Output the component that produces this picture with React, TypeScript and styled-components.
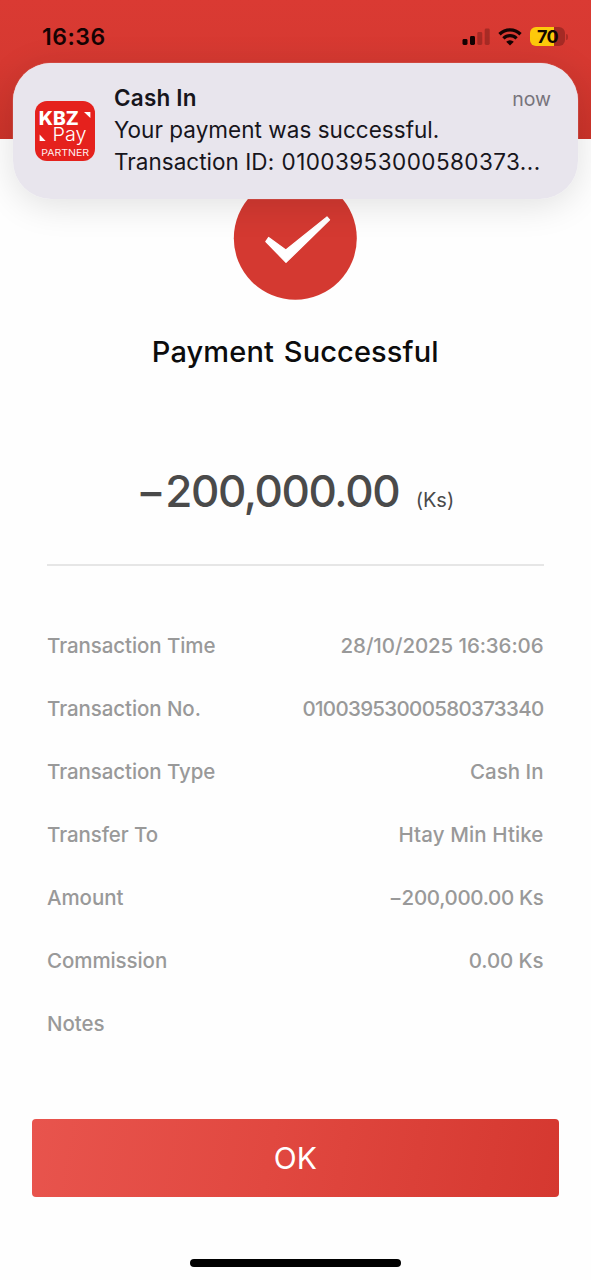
import React from "react";
import styled, { createGlobalStyle } from "styled-components";

const GlobalStyle = createGlobalStyle`
  *, *::before, *::after { box-sizing: border-box; }
  html, body { margin: 0; padding: 0; background: #fefefe; }
  body { font-family: Inter, "Liberation Sans", sans-serif; }
`;

const Screen = styled.div`
  position: relative;
  display: flex;
  flex-direction: column;
  width: 591px;
  height: 1280px;
  overflow: hidden;
  background: #fefefe;
`;

const Header = styled.header`
  flex: none;
  height: 138.5px;
  padding: 20px 23px 0 42px;
  background: linear-gradient(#da3a33 0%, #d63931 45%, #cb332a 100%);
`;

const StatusBar = styled.div`
  display: flex;
  align-items: center;
  justify-content: space-between;
  height: 33px;
`;

const Clock = styled.time`
  font-size: 23px;
  font-weight: 600;
  letter-spacing: 0.5px;
  color: #150303;
`;

const StatusIcons = styled.div`
  display: flex;
  align-items: center;
  gap: 8px;
`;

const Battery = styled.div`
  display: flex;
  align-items: center;
  gap: 1px;
`;

const BatteryBody = styled.div`
  width: 35px;
  height: 19px;
  border-radius: 6px;
  background: linear-gradient(90deg, #fdc90b 0 69%, #a52a24 69%);
  color: #120800;
  font-size: 18px;
  font-weight: 700;
  line-height: 19px;
  letter-spacing: -0.6px;
  text-align: center;
`;

const BatteryTip = styled.div`
  width: 2px;
  height: 6px;
  border-radius: 0 2px 2px 0;
  background: #ad2c26;
`;

const Banner = styled.aside`
  position: absolute;
  z-index: 2;
  top: 63px;
  left: 13px;
  display: flex;
  width: 565px;
  height: 136px;
  padding: 18.5px 27px 0 22px;
  border-radius: 38px;
  background: #e8e5ed;
  box-shadow: 0 0 1px rgba(255, 255, 255, 0.9), 0 6px 36px rgba(0, 0, 0, 0.12);
`;

const AppIcon = styled.svg`
  flex: none;
  width: 60px;
  height: 60px;
  margin: 19.5px 19px 0 0;
`;

const BannerBody = styled.div`
  flex: 1;
  min-width: 0;
  color: #17151c;
  font-size: 22.5px;
  line-height: 32px;
`;

const BannerTop = styled.div`
  display: flex;
  justify-content: space-between;
  height: 32px;
`;

const BannerTitle = styled.strong`
  font-weight: 600;
  letter-spacing: 0.2px;
`;

const BannerTime = styled.span`
  color: #77747c;
  font-size: 19.5px;
  line-height: 34px;
`;

const BannerText = styled.div`
  letter-spacing: 0.03px;
  white-space: nowrap;
`;

const BannerNumber = styled.span`
  margin-left: 1px;
  letter-spacing: 0.42px;
`;

const Main = styled.main`
  display: flex;
  flex: 1;
  flex-direction: column;
  align-items: center;
  padding: 38px 32px 0 31.5px;
`;

const Check = styled.svg`
  flex: none;
  width: 124px;
  height: 124px;
`;

const Title = styled.h1`
  margin: 31px 0 0;
  color: #0c0c0c;
  font-size: 29px;
  font-weight: 500;
  line-height: 40px;
  letter-spacing: 0.12px;
  word-spacing: 2px;
`;

const AmountLine = styled.div`
  display: flex;
  align-items: baseline;
  gap: 16.5px;
  height: 60px;
  margin-top: 89px;
  color: #4a4a4a;
  line-height: 60px;
`;

const Amount = styled.span`
  font-size: 44px;
  font-weight: 500;
  letter-spacing: -1.4px;
`;

const Minus = styled.span`
  margin-right: 1px;
`;

const Currency = styled.span`
  font-size: 20px;
  font-weight: 400;
`;

const Details = styled.dl`
  align-self: stretch;
  height: 554.5px;
  margin: 43.5px 15.5px 0;
  padding-top: 48px;
  border-top: 2px solid #e6e6e6;
`;

const DetailRow = styled.div`
  display: flex;
  align-items: center;
  justify-content: space-between;
  height: 63px;
  color: #999;
  font-size: 20.5px;
  font-weight: 450;
`;

const Label = styled.dt`
  letter-spacing: -0.08px;
`;

const Value = styled.dd<{ $spacing?: string }>`
  margin: 0;
  letter-spacing: ${(p) => p.$spacing ?? "0"};
`;

const OkButton = styled.button`
  flex: none;
  align-self: stretch;
  height: 78px;
  margin: 0;
  padding: 0;
  border: 0;
  border-radius: 4px;
  background: linear-gradient(100deg, #e8544d 0%, #e14840 45%, #d53830 100%);
  color: #fff;
  font-family: inherit;
  font-size: 30px;
  line-height: 78px;
`;

const HomeIndicator = styled.div`
  flex: none;
  width: 211px;
  height: 8px;
  margin-top: 62px;
  border-radius: 4px;
  background: #000;
`;

const details: { label: string; value: string; spacing?: string }[] = [
  { label: "Transaction Time", value: "28/10/2025 16:36:06", spacing: "-0.1px" },
  { label: "Transaction No.", value: "01003953000580373340", spacing: "-0.68px" },
  { label: "Transaction Type", value: "Cash In" },
  { label: "Transfer To", value: "Htay Min Htike", spacing: "0.1px" },
  { label: "Amount", value: "−200,000.00 Ks", spacing: "-0.32px" },
  { label: "Commission", value: "0.00 Ks", spacing: "-0.1px" },
  { label: "Notes", value: "" },
];

function SignalIcon() {
  return (
    <svg width="28" height="18" viewBox="0 0 28 18">
      <rect x="0.5" y="11" width="5" height="6" rx="1.4" fill="#150303" />
      <rect x="8" y="8" width="5" height="9" rx="1.4" fill="#150303" />
      <rect x="15.3" y="4" width="5" height="13" rx="1.4" fill="#a72b25" />
      <rect x="22.7" y="0.5" width="5" height="16.5" rx="1.4" fill="#a72b25" />
    </svg>
  );
}

function WifiIcon() {
  return (
    <svg width="24" height="18" viewBox="0 0 24 18" fill="none" stroke="#150303">
      <path d="M1.5 6.2a15 15 0 0 1 21 0" strokeWidth="3.3" />
      <path d="M5.4 10.3a9.4 9.4 0 0 1 13.2 0" strokeWidth="3.2" />
      <path d="M12 17.5 8.2 13.7a5.4 5.4 0 0 1 7.6 0Z" fill="#150303" stroke="none" />
    </svg>
  );
}

function KbzPayIcon() {
  return (
    <AppIcon viewBox="0 0 60 60">
      <rect width="60" height="60" rx="12" fill="#e5211d" />
      <g fill="#fff" fontFamily="Inter, sans-serif">
        <text x="3.8" y="24.2" fontSize="18.5" fontWeight="800" textLength="40" lengthAdjust="spacingAndGlyphs">
          KBZ
        </text>
        <text x="17.5" y="40" fontSize="18.5" fontWeight="300" textLength="34" lengthAdjust="spacingAndGlyphs">
          Pay
        </text>
        <text x="6.2" y="54.7" fontSize="8.8" textLength="48" lengthAdjust="spacingAndGlyphs" fillOpacity="0.95">
          PARTNER
        </text>
        <path d="M49 11h6.4v6Z" />
        <path d="M4.6 33.6v6.4h6Z" />
      </g>
    </AppIcon>
  );
}

export default function App() {
  return (
    <Screen>
      <GlobalStyle />
      <Header>
        <StatusBar>
          <Clock>16:36</Clock>
          <StatusIcons>
            <SignalIcon />
            <WifiIcon />
            <Battery>
              <BatteryBody>70</BatteryBody>
              <BatteryTip />
            </Battery>
          </StatusIcons>
        </StatusBar>
      </Header>

      <Banner>
        <KbzPayIcon />
        <BannerBody>
          <BannerTop>
            <BannerTitle>Cash In</BannerTitle>
            <BannerTime>now</BannerTime>
          </BannerTop>
          <BannerText>Your payment was successful.</BannerText>
          <BannerText>
            Transaction ID: <BannerNumber>01003953000580373...</BannerNumber>
          </BannerText>
        </BannerBody>
      </Banner>

      <Main>
        <Check viewBox="0 0 124 124">
          <circle cx="62.3" cy="61.3" r="61.5" fill="#d43931" />
          <path
            d="M35.6 60.5 52.8 73 94 40 96.6 42.8 53 85.4 32.8 64.5Z"
            fill="#fff"
            stroke="#fff"
            strokeWidth="1.2"
            strokeLinejoin="round"
          />
        </Check>
        <Title>Payment Successful</Title>
        <AmountLine>
          <Amount>
            <Minus>−</Minus>200,000.00
          </Amount>
          <Currency>(Ks)</Currency>
        </AmountLine>
        <Details>
          {details.map((d) => (
            <DetailRow key={d.label}>
              <Label>{d.label}</Label>
              <Value $spacing={d.spacing}>{d.value}</Value>
            </DetailRow>
          ))}
        </Details>
        <OkButton>OK</OkButton>
        <HomeIndicator />
      </Main>
    </Screen>
  );
}
